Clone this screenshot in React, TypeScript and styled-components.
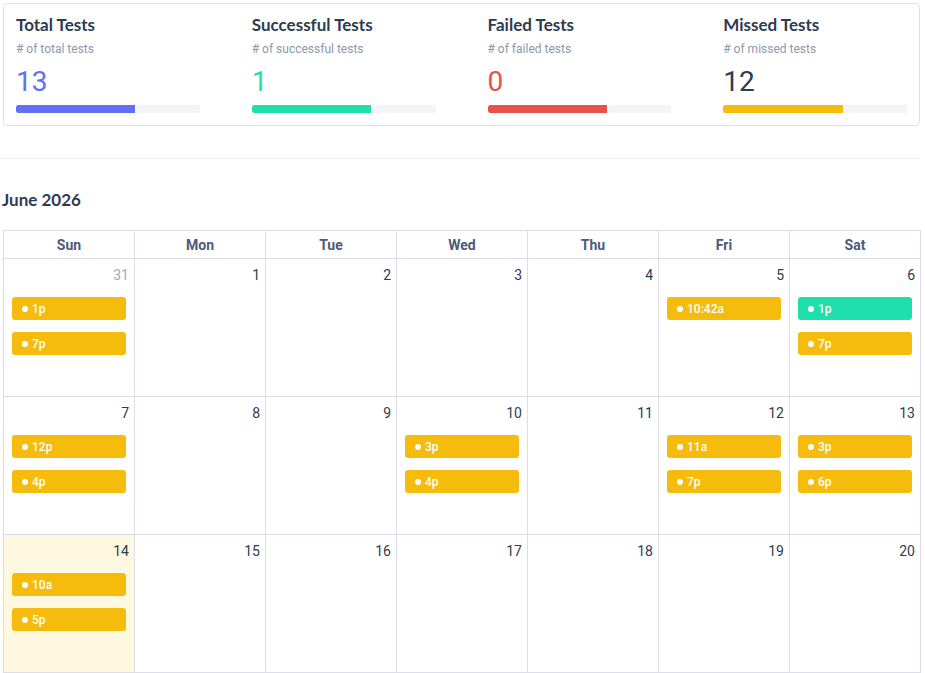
import React from 'react';
import styled, { createGlobalStyle } from 'styled-components';

const GlobalStyle = createGlobalStyle`
  body {
    margin: 0;
    background: #ffffff;
    font-family: Roboto, 'Liberation Sans', sans-serif;
    color: #2d3c50;
  }
`;

type Tone = 'indigo' | 'green' | 'red' | 'yellow';

const tones: Record<Tone, string> = {
  indigo: '#6370f5',
  green: '#1fe0ad',
  red: '#e8524a',
  yellow: '#f5bc0e',
};

const stats: { title: string; sub: string; value: number; tone: Tone; plain?: boolean }[] = [
  { title: 'Total Tests', sub: '# of total tests', value: 13, tone: 'indigo' },
  { title: 'Successful Tests', sub: '# of successful tests', value: 1, tone: 'green' },
  { title: 'Failed Tests', sub: '# of failed tests', value: 0, tone: 'red' },
  { title: 'Missed Tests', sub: '# of missed tests', value: 12, tone: 'yellow', plain: true },
];

type Ev = { label: string; tone: 'yellow' | 'green' };
type Day = { n: number; muted?: boolean; today?: boolean; events?: Ev[] };

const y = (label: string): Ev => ({ label, tone: 'yellow' });

const weeks: Day[][] = [
  [
    { n: 31, muted: true, events: [y('1p'), y('7p')] },
    { n: 1 },
    { n: 2 },
    { n: 3 },
    { n: 4 },
    { n: 5, events: [y('10:42a')] },
    { n: 6, events: [{ label: '1p', tone: 'green' }, y('7p')] },
  ],
  [
    { n: 7, events: [y('12p'), y('4p')] },
    { n: 8 },
    { n: 9 },
    { n: 10, events: [y('3p'), y('4p')] },
    { n: 11 },
    { n: 12, events: [y('11a'), y('7p')] },
    { n: 13, events: [y('3p'), y('6p')] },
  ],
  [
    { n: 14, today: true, events: [y('10a'), y('5p')] },
    { n: 15 },
    { n: 16 },
    { n: 17 },
    { n: 18 },
    { n: 19 },
    { n: 20 },
  ],
  [21, 22, 23, 24, 25, 26, 27].map((n) => ({ n })),
  [
    { n: 28 },
    { n: 29 },
    { n: 30 },
    { n: 1, muted: true },
    { n: 2, muted: true },
    { n: 3, muted: true },
    { n: 4, muted: true },
  ],
];

const dayNames = ['Sun', 'Mon', 'Tue', 'Wed', 'Thu', 'Fri', 'Sat'];

export default function App() {
  return (
    <>
      <GlobalStyle />
      <Page>
        <StatsCard>
          {stats.map((s) => (
            <Stat key={s.title}>
              <StatTitle>{s.title}</StatTitle>
              <StatSub>{s.sub}</StatSub>
              <StatValue $color={s.plain ? '#2d3c50' : tones[s.tone]}>{s.value}</StatValue>
              <Track>
                <Fill $color={tones[s.tone]} />
              </Track>
            </Stat>
          ))}
        </StatsCard>

        <Divider />

        <MonthTitle>June 2026</MonthTitle>

        <Calendar>
          <thead>
            <tr>
              {dayNames.map((d) => (
                <HeadCell key={d}>{d}</HeadCell>
              ))}
            </tr>
          </thead>
          <tbody>
            {weeks.map((week, i) => (
              <tr key={i}>
                {week.map((day, j) => (
                  <DayCell key={j} $today={day.today}>
                    <DayInner>
                      <DayNumber $muted={day.muted}>{day.n}</DayNumber>
                      <Events>
                        {day.events?.map((ev, k) => (
                          <EventPill key={k} $color={tones[ev.tone]}>
                            <Dot />
                            {ev.label}
                          </EventPill>
                        ))}
                      </Events>
                    </DayInner>
                  </DayCell>
                ))}
              </tr>
            ))}
          </tbody>
        </Calendar>
      </Page>
    </>
  );
}

const Page = styled.div`
  width: 917px;
  padding: 3px 0 40px 3px;
`;

const StatsCard = styled.div`
  display: grid;
  grid-template-columns: repeat(4, 1fr);
  column-gap: 52px;
  padding: 10px 12px 12px;
  border: 1px solid #dfe1e8;
  border-radius: 4px;
`;

const Stat = styled.div`
  display: flex;
  flex-direction: column;
`;

const StatTitle = styled.div`
  font-family: Lato, 'Noto Sans', sans-serif;
  font-size: 17px;
  font-weight: 700;
  line-height: 22px;
  color: #2d3c50;
`;

const StatSub = styled.div`
  margin-top: 5px;
  font-size: 12px;
  line-height: 16px;
  color: #8c99ab;
`;

const StatValue = styled.div<{ $color: string }>`
  margin-top: 9px;
  font-size: 28px;
  line-height: 32px;
  font-weight: 400;
  color: ${(p) => p.$color};
`;

const Track = styled.div`
  margin-top: 7px;
  height: 8px;
  background: #f3f4f9;
  border-radius: 2px;
  overflow: hidden;
`;

const Fill = styled.div<{ $color: string }>`
  width: 65%;
  height: 100%;
  background: ${(p) => p.$color};
  border-radius: 2px 0 0 2px;
`;

const Divider = styled.hr`
  margin: 32px 0 0 -3px;
  border: none;
  border-top: 1px solid #eff0f4;
`;

const MonthTitle = styled.h2`
  margin: 30px 0 19px -1px;
  font-family: Lato, 'Noto Sans', sans-serif;
  font-size: 17px;
  font-weight: 700;
  line-height: 22px;
  color: #2d3c50;
`;

const Calendar = styled.table`
  width: 918px;
  border-collapse: collapse;
  table-layout: fixed;
`;

const HeadCell = styled.th`
  height: 27px;
  padding: 0;
  border: 1px solid #dcdde9;
  font-size: 14px;
  font-weight: 700;
  color: #4b5b78;
  text-align: center;
  vertical-align: middle;
`;

const DayCell = styled.td<{ $today?: boolean }>`
  height: 137px;
  padding: 0;
  border: 1px solid #dcdde9;
  vertical-align: top;
  background: ${(p) => (p.$today ? '#fef8e0' : 'transparent')};
`;

const DayInner = styled.div`
  display: flex;
  flex-direction: column;
  padding: 8px 5px 0 8px;
`;

const DayNumber = styled.div<{ $muted?: boolean }>`
  text-align: right;
  font-size: 14px;
  line-height: 16px;
  color: ${(p) => (p.$muted ? '#a0a9b6' : '#2d3c50')};
`;

const Events = styled.div`
  display: flex;
  flex-direction: column;
  gap: 12px;
  margin-top: 14px;
  padding-right: 3px;
`;

const EventPill = styled.div<{ $color: string }>`
  display: flex;
  align-items: center;
  gap: 4px;
  height: 23px;
  padding: 0 10px;
  border-radius: 3px;
  background: ${(p) => p.$color};
  color: #ffffff;
  font-size: 12px;
  font-weight: 500;
`;

const Dot = styled.span`
  width: 6px;
  height: 6px;
  border-radius: 50%;
  background: #ffffff;
`;
